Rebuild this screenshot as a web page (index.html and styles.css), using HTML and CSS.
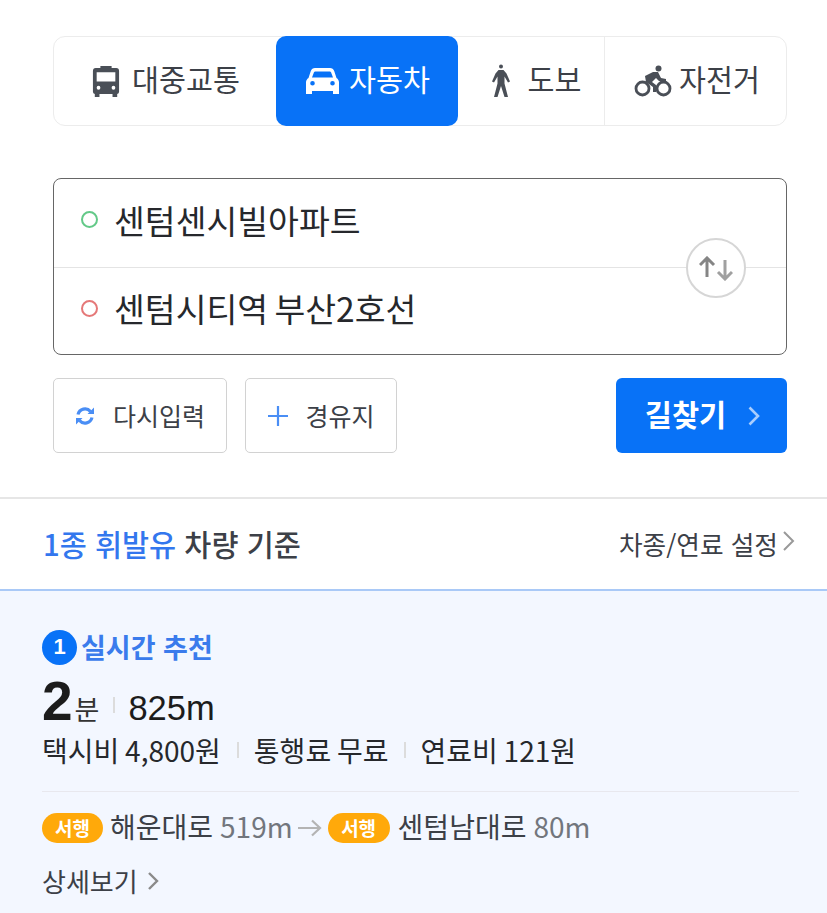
FILE: index.html
```html
<!DOCTYPE html>
<html lang="ko">
<head>
<meta charset="utf-8">
<title>길찾기</title>
<link rel="stylesheet" href="styles.css">
</head>
<body>
<section class="search">
  <nav class="tabs">
    <a class="tab tab-transit">
      <svg class="ico" width="28" height="33" viewBox="0 0 30 32" preserveAspectRatio="none"><path fill="#4a4f57" d="M9 1h12v2h5a3 3 0 0 1 3 3v20a2 2 0 0 1-2 2v3h-5v-3H8v3H3v-3a2 2 0 0 1-2-2V6a3 3 0 0 1 3-3h5zM5 7v9h20V7zm2 13a2 2 0 1 0 0 4 2 2 0 0 0 0-4zm16 0a2 2 0 1 0 0 4 2 2 0 0 0 0-4z"/></svg>
      <span>대중교통</span>
    </a>
    <a class="tab tab-car active">
      <svg class="ico" width="33" height="28" viewBox="0 0 33 28"><path fill="#fff" d="M9 1h15c2 0 3.500 1 4.200 3l2.300 7c1.500 1 2.500 2.500 2.500 4.500V27h-6v-3H6v3H0V15.500C0 13.500 1 12 2.500 11l2.300-7C5.500 2 7 1 9 1zm.5 3.500C8.500 4.500 8 5 7.700 6L6 10.500h21L25.300 6c-.3-1-.8-1.500-1.800-1.500zM6.500 14a2.300 2.300 0 1 0 0 4.600 2.300 2.300 0 0 0 0-4.600zm20 0a2.300 2.300 0 1 0 0 4.600 2.300 2.300 0 0 0 0-4.600z"/></svg>
      <span>자동차</span>
    </a>
    <a class="tab tab-walk">
      <svg class="ico" width="20" height="34" viewBox="0 0 20 34"><circle cx="10" cy="2.500" r="2" fill="#4a4f57"/><path fill="#4a4f57" d="M7.500 6h5l3 3.500 3.500 8-2 1-3.500-6v7l3.500 13.500h-3.500l-3.500-11-3.500 11H3L6.500 19.500v-7L3 18.500l-2-1 3.500-8z"/></svg>
      <span>도보</span>
    </a>
    <a class="tab tab-bike">
      <svg class="ico" width="38" height="32" viewBox="0 0 38 32"><g fill="none" stroke="#4a4f57" stroke-width="2.800"><circle cx="8.500" cy="23.500" r="6.500"/><circle cx="29.500" cy="23.500" r="6.500"/></g><circle cx="24.500" cy="3.500" r="3" fill="#4a4f57"/><path fill="#4a4f57" d="M11 11l8-4h5l3 6 5 1v3l-7-1-3-3-4 4 4 3v7h-3v-5l-7-5z"/></svg>
      <span>자전거</span>
    </a>
  </nav>

  <div class="route">
    <div class="route-row">
      <span class="dot dot-start"></span>
      <span class="place">센텀센시빌아파트</span>
    </div>
    <div class="route-row route-row-end">
      <span class="dot dot-end"></span>
      <span class="place">센텀시티역 부산2호선</span>
    </div>
    <button class="swap" aria-label="출발지 도착지 바꾸기">
      <svg width="34" height="25" viewBox="0 0 34 25"><path fill="none" stroke="#858585" stroke-width="3" d="M8 21V2M1 9l7-7 7 7"/><path fill="none" stroke="#a0a0a0" stroke-width="3" d="M26 4v19M19 16l7 7 7-7"/></svg>
    </button>
  </div>

  <div class="actions">
    <button class="btn btn-reset">
      <svg width="20" height="20" viewBox="0 0 20 20"><path fill="none" stroke="#4a8ef5" stroke-width="3.200" d="M3 8.500a7.200 7.200 0 0 1 12.500-3M17 11.500a7.200 7.200 0 0 1-12.500 3"/><path fill="#4a8ef5" d="M12.500 8H19V1.500zM7.500 12H1v6.500z"/></svg>
      <span>다시입력</span>
    </button>
    <button class="btn btn-via">
      <svg width="22" height="22" viewBox="0 0 22 22"><path fill="none" stroke="#4a8ef5" stroke-width="2.200" d="M11 1v20M1 11h20"/></svg>
      <span>경유지</span>
    </button>
    <button class="btn-go">
      <span>길찾기</span>
      <svg width="14" height="22" viewBox="0 0 14 22"><path fill="none" stroke="#a9cdfd" stroke-width="2.600" d="M2.500 2.500l8.500 8.500-8.500 8.500"/></svg>
    </button>
  </div>
</section>

<header class="fuel">
  <h2 class="fuel-title"><em>1종 휘발유</em> 차량 기준</h2>
  <a class="fuel-link">
    <span>차종/연료 설정</span>
    <svg width="14" height="22" viewBox="0 0 14 22"><path fill="none" stroke="#999" stroke-width="2" d="M2 2l9 9-9 9"/></svg>
  </a>
</header>

<article class="result">
  <div class="rank">
    <span class="rank-num">1</span>
    <span class="rank-label">실시간 추천</span>
  </div>
  <div class="summary">
    <strong class="time">2</strong><span class="unit">분</span>
    <i class="bar bar-tall"></i>
    <span class="dist">825m</span>
  </div>
  <div class="fees">
    <span class="fee-first">택시비 4,800원</span>
    <i class="bar"></i>
    <span>통행료 무료</span>
    <i class="bar"></i>
    <span>연료비 121원</span>
  </div>
  <div class="path">
    <span class="pill">서행</span>
    <span class="road">해운대로</span>
    <span class="len">519m</span>
    <svg class="arrow" width="24" height="18" viewBox="0 0 24 18"><path fill="none" stroke="#b4b4b4" stroke-width="2.200" d="M0 9h22M14 1.500L22 9l-8 7.500"/></svg>
    <span class="pill pill-next">서행</span>
    <span class="road">센텀남대로</span>
    <span class="len">80m</span>
  </div>
  <a class="more">
    <span>상세보기</span>
    <svg width="14" height="20" viewBox="0 0 14 20"><path fill="none" stroke="#8a8a8a" stroke-width="2.400" d="M3 2l8 8-8 8"/></svg>
  </a>
</article>
</body>
</html>
```
FILE: styles.css
```css
* { box-sizing: border-box; }
html, body { margin: 0; padding: 0; }
body {
  width: 827px;
  height: 913px;
  overflow: hidden;
  background: #fff;
  color: #222;
  font-family: "Noto Sans CJK KR", "Noto Sans", sans-serif;
}
em { font-style: normal; }
i { font-style: normal; }
h2 { margin: 0; font-weight: 400; }
button { font-family: inherit; margin: 0; padding: 0; cursor: pointer; }

.search { padding: 36px 40px 44px 53px; }

.tabs {
  display: grid;
  grid-template-columns: 222px 182px 146px 184px;
  height: 90px;
  border: 1px solid #ececec;
  border-radius: 12px;
}
.tab {
  display: flex;
  align-items: center;
  justify-content: center;
  gap: 12px;
  margin: -1px 0;
  font-size: 29.300px;
  line-height: 1;
  color: #3c4047;
}
.tab span { padding-bottom: 4px; }
.tab-transit { margin-left: -1px; gap: 12px; padding-left: 3px; }
.tab-walk { gap: 17px; padding-left: 10px; }
.tab-bike { border-left: 1px solid #ececec; gap: 7px; margin-right: -1px; }
.tab.active {
  background: #0872f7;
  color: #fff;
  border-radius: 10px;
  gap: 10px;
  padding-left: 2px;
}
.ico { flex: none; }

.route {
  position: relative;
  margin-top: 52px;
  height: 177px;
  border: 1px solid #666;
  border-radius: 8px;
}
.route-row {
  display: flex;
  align-items: center;
  gap: 16px;
  height: 88px;
  padding: 0 0 7px 27px;
}
.route-row-end { border-top: 1px solid #e4e4e4; }
.place {
  font-size: 33.500px;
  line-height: 1;
  color: #26282c;
  word-spacing: -3px;
}
.dot {
  flex: none;
  width: 17px;
  height: 17px;
  border-radius: 50%;
  background: #fff;
  border: 2px solid;
}
.dot-start { border-color: #63c988; }
.dot-end { border-color: #e57878; }
.swap {
  position: absolute;
  top: 59px;
  right: 40px;
  width: 60px;
  height: 60px;
  display: flex;
  align-items: center;
  justify-content: center;
  border-radius: 50%;
  border: 2px solid #d6d6d6;
  background: #fff;
}

.actions {
  display: flex;
  margin-top: 23px;
  height: 75px;
}
.btn {
  display: flex;
  align-items: center;
  justify-content: center;
  height: 75px;
  border: 1px solid #d2d2d2;
  border-radius: 5px;
  background: #fff;
  color: #3c4047;
  font-size: 25px;
  line-height: 1;
}
.btn-reset { width: 174px; gap: 18px; }
.btn-via { width: 152px; margin-left: 18px; gap: 16px; }
.btn-go {
  margin-left: auto;
  width: 171px;
  height: 75px;
  display: flex;
  align-items: center;
  justify-content: center;
  gap: 21px;
  padding-left: 3px;
  border: 0;
  border-radius: 6px;
  background: #0872f7;
  color: #fff;
  font-size: 29.500px;
  font-weight: 700;
  line-height: 1;
}
.btn-go span { padding-bottom: 3px; }

.fuel {
  display: flex;
  align-items: center;
  justify-content: space-between;
  height: 94px;
  padding: 0 31px 0 43px;
  border-top: 2px solid #e6e6e6;
  border-bottom: 2px solid #a9c9f7;
}
.fuel-title { font-size: 29.400px; line-height: 1; color: #3c4047; font-weight: 500; }
.fuel-title em { color: #3377ee; }
.fuel-link {
  display: flex;
  align-items: center;
  gap: 4px;
  font-size: 25.700px;
  line-height: 1;
  color: #3c4047;
}
.fuel-link svg { margin-top: -6px; }

.result {
  height: 322px;
  padding: 38px 28px 0 42px;
  background: #f3f7ff;
}
.rank { display: flex; align-items: center; gap: 4px; height: 36px; }
.rank-num {
  width: 35px;
  height: 35px;
  display: flex;
  align-items: center;
  justify-content: center;
  border-radius: 50%;
  background: #0872f7;
  color: #fff;
  font: 700 22px "Liberation Sans", sans-serif;
}
.rank-label { font-size: 27px; font-weight: 700; line-height: 1; color: #3a7bec; padding-bottom: 2px; }
.summary {
  display: flex;
  align-items: baseline;
  margin-top: 11px;
  height: 50px;
}
.time { font: 700 55px/50px "Liberation Sans", sans-serif; color: #1c1c1c; }
.unit { font-size: 27px; line-height: 1; margin-left: 2px; color: #333; }
.bar {
  display: inline-block;
  align-self: center;
  width: 2px;
  height: 16px;
  background: #dcdcdc;
  margin: 0 15px;
}
.bar-tall { margin: 8px 13px 0 14px; }
.dist { font: 400 34.500px/50px "Liberation Sans", sans-serif; color: #1c1c1c; }
.fees {
  display: flex;
  align-items: center;
  height: 40px;
  font-size: 28px;
  line-height: 1;
  color: #26282c;
  margin-top: 4px;
  word-spacing: -2px;
}
.fee-first { padding-right: 1px; }
.path {
  display: flex;
  align-items: center;
  height: 72px;
  margin-top: 21px;
  border-top: 1px solid #e8e8ee;
  font-size: 28px;
  line-height: 1;
}
.pill {
  display: flex;
  align-items: center;
  justify-content: center;
  width: 61px;
  height: 30px;
  border-radius: 15px;
  background: #ffa90a;
  color: #fff;
  font-size: 19px;
  font-weight: 700;
  margin-right: 7px;
}
.pill-next { width: 62px; margin-right: 8px; }
.road { color: #3c4047; padding-bottom: 3px; }
.len { color: #72767d; margin-left: 7px; padding-bottom: 3px; }
.arrow { margin: 0 6px 0 5px; }
.more {
  display: flex;
  align-items: center;
  gap: 8px;
  font-size: 26px;
  line-height: 1;
  color: #3c4047;
  margin-top: 5px;
}
```
